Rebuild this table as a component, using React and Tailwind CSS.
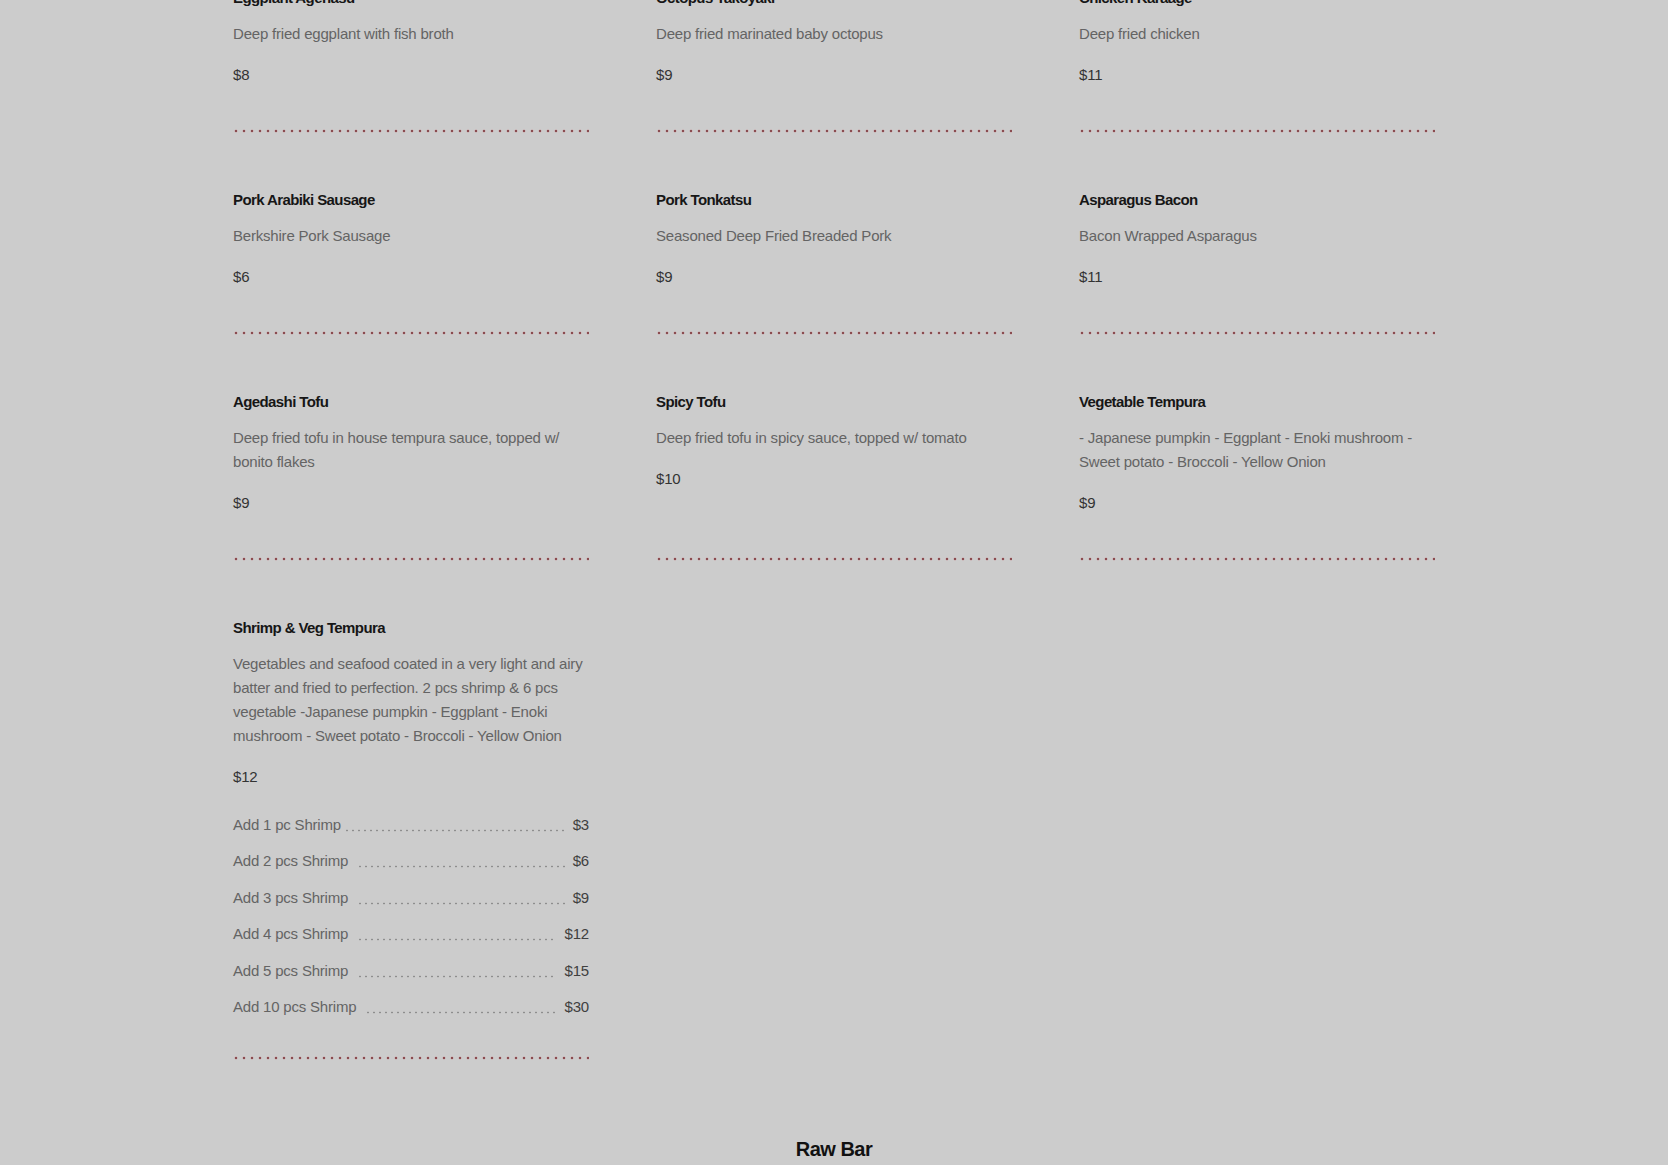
import React from "react";

const ROWS = [
  [
    { name: "Eggplant Agenasu", desc: "Deep fried eggplant with fish broth", price: "$8" },
    { name: "Octopus Takoyaki", desc: "Deep fried marinated baby octopus", price: "$9" },
    { name: "Chicken Karaage", desc: "Deep fried chicken", price: "$11" },
  ],
  [
    { name: "Pork Arabiki Sausage", desc: "Berkshire Pork Sausage", price: "$6" },
    { name: "Pork Tonkatsu", desc: "Seasoned Deep Fried Breaded Pork", price: "$9" },
    { name: "Asparagus Bacon", desc: "Bacon Wrapped Asparagus", price: "$11" },
  ],
  [
    {
      name: "Agedashi Tofu",
      desc: "Deep fried tofu in house tempura sauce, topped w/ bonito flakes",
      price: "$9",
    },
    { name: "Spicy Tofu", desc: "Deep fried tofu in spicy sauce, topped w/ tomato", price: "$10" },
    {
      name: "Vegetable Tempura",
      desc: "- Japanese pumpkin - Eggplant - Enoki mushroom - Sweet potato - Broccoli - Yellow Onion",
      price: "$9",
    },
  ],
  [
    {
      name: "Shrimp & Veg Tempura",
      desc: "Vegetables and seafood coated in a very light and airy batter and fried to perfection. 2 pcs shrimp & 6 pcs vegetable -Japanese pumpkin - Eggplant - Enoki mushroom - Sweet potato - Broccoli - Yellow Onion",
      price: "$12",
      addons: [
        { label: "Add 1 pc Shrimp", price: "$3", tight: true },
        { label: "Add 2 pcs Shrimp", price: "$6" },
        { label: "Add 3 pcs Shrimp", price: "$9" },
        { label: "Add 4 pcs Shrimp", price: "$12" },
        { label: "Add 5 pcs Shrimp", price: "$15" },
        { label: "Add 10 pcs Shrimp", price: "$30" },
      ],
    },
  ],
];

function MenuItem({ item }) {
  return (
    <div className="flex flex-col">
      <h3 className="text-[15px] leading-6 font-bold tracking-[-0.6px] text-[#161616]">{item.name}</h3>
      <p className="mt-3 text-[15px] leading-6 tracking-[-0.2px] text-[#646464]">{item.desc}</p>
      <div className="mt-[17px] text-[15px] leading-6 tracking-[-0.2px] text-[#333333]">{item.price}</div>

      {item.addons && (
        <div className="mt-6 mb-[-5px] flex flex-col gap-[12.4px]">
          {item.addons.map((a) => (
            <div key={a.label} className="flex h-6 text-[15px] leading-6 tracking-[-0.2px]">
              <span className="text-[#646464]">{a.label}</span>
              <span
                className={`flex-1 self-end mb-[5px] mr-2 h-[3px] bg-[radial-gradient(circle,#8e8e8e_0.7px,transparent_1.2px)] bg-[length:6px_3px] bg-repeat-x ${
                  a.tight ? "ml-[3px]" : "ml-[9px]"
                }`}
              />
              <span className="text-[#404040]">{a.price}</span>
            </div>
          ))}
        </div>
      )}

      {/* dotted separator, pinned to the bottom of the grid row */}
      <div className="mt-auto pt-[42px]">
        <div className="h-1 w-full bg-[radial-gradient(circle,#8a4c50_0.9px,rgba(200,150,155,0.55)_1.4px,transparent_1.8px)] bg-[length:8px_4px] bg-[position:-1px_0] bg-repeat-x" />
      </div>
    </div>
  );
}

export default function App() {
  return (
    <div className="min-h-screen overflow-hidden bg-[#cccccc] font-['Liberation_Sans',Arial,sans-serif]">
      <div className="mx-auto w-[1202px] -mt-[14px] pb-10">
        <div className="grid grid-cols-3 gap-x-[67px] gap-y-[55px]">
          {ROWS.flat().map((item) => (
            <MenuItem key={item.name} item={item} />
          ))}
        </div>
        <h2 className="mt-[75px] text-center text-[20px] leading-7 font-bold tracking-[-0.5px] text-[#111111]">
          Raw Bar
        </h2>
      </div>
    </div>
  );
}
